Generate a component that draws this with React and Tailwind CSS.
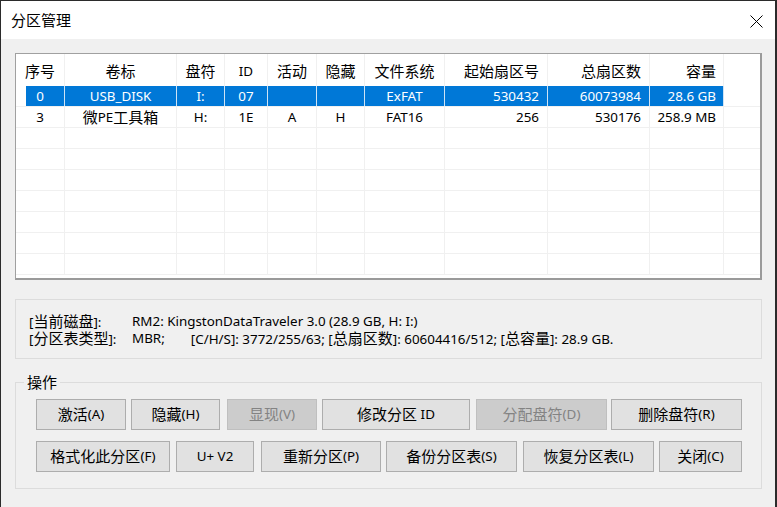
import React from 'react';

const CJK = /([\u3000-\u9fff\uff00-\uffef]+)/;

// CJK runs render a bit larger than Latin in this dialog
const Mix = ({ text }) =>
  text.split(CJK).map((s, i) =>
    i % 2 ? (
      <span key={i} className="text-[15px]">
        {s}
      </span>
    ) : (
      s
    )
  );

const COLS = [
  { key: 'no', title: '序号', w: 'w-[49px]', align: 'justify-center' },
  { key: 'label', title: '卷标', w: 'w-[112px]', align: 'justify-center' },
  { key: 'drive', title: '盘符', w: 'w-[48px]', align: 'justify-center' },
  { key: 'id', title: 'ID', w: 'w-[43px]', align: 'justify-center' },
  { key: 'active', title: '活动', w: 'w-[49px]', align: 'justify-center' },
  { key: 'hidden', title: '隐藏', w: 'w-[48px]', align: 'justify-center' },
  { key: 'fs', title: '文件系统', w: 'w-[80px]', align: 'justify-center' },
  { key: 'start', title: '起始扇区号', w: 'w-[103px]', align: 'justify-end pr-[8px]' },
  { key: 'total', title: '总扇区数', w: 'w-[102px]', align: 'justify-end pr-[8px]' },
  { key: 'size', title: '容量', w: 'w-[74px]', align: 'justify-end pr-[7px]' },
];

const ROWS = [
  { no: '0', label: 'USB_DISK', drive: 'I:', id: '07', active: '', hidden: '', fs: 'ExFAT', start: '530432', total: '60073984', size: '28.6 GB', selected: true },
  { no: '3', label: '微PE工具箱', drive: 'H:', id: '1E', active: 'A', hidden: 'H', fs: 'FAT16', start: '256', total: '530176', size: '258.9 MB' },
  {}, {}, {}, {}, {}, {}, {},
];

const ROW1 = [
  { label: '激活(A)', cls: 'ml-0 w-[90px]' },
  { label: '隐藏(H)', cls: 'ml-[5px] w-[89px]' },
  { label: '显现(V)', cls: 'ml-[7px] w-[90px]', disabled: true },
  { label: '修改分区 ID', cls: 'ml-[5px] w-[148px]' },
  { label: '分配盘符(D)', cls: 'ml-[6px] w-[131px]', disabled: true },
  { label: '删除盘符(R)', cls: 'ml-[4px] w-[131px]' },
];

const ROW2 = [
  { label: '格式化此分区(F)', cls: 'ml-0 w-[134px]' },
  { label: 'U+ V2', cls: 'ml-[6px] w-[78px]' },
  { label: '重新分区(P)', cls: 'ml-[7px] w-[120px]' },
  { label: '备份分区表(S)', cls: 'ml-[5px] w-[131px]' },
  { label: '恢复分区表(L)', cls: 'ml-[6px] w-[131px]' },
  { label: '关闭(C)', cls: 'ml-[5px] w-[83px]' },
];

const Btn = ({ label, cls, disabled }) => (
  <button
    type="button"
    className={`${cls} h-[31px] flex items-center justify-center whitespace-pre border ${
      disabled ? 'bg-[#cccccc] border-[#bfbfbf] text-[#838383]' : 'bg-[#e1e1e1] border-[#adadad] text-black'
    }`}
  >
    <Mix text={label} />
  </button>
);

export default function App() {
  return (
    <div className="w-[777px] h-[507px] overflow-hidden bg-[#f0f0f0] border-l border-t border-r-2 border-[#2b2b2b] font-['Noto_Sans','Noto_Sans_CJK_SC',sans-serif] text-[13.4px] text-black">
      {/* title bar */}
      <div className="h-[38px] bg-white flex items-center justify-between pl-[10px] pr-[12px]">
        <span className="text-[15px] leading-none">分区管理</span>
        <svg width="13" height="13" viewBox="0 0 13 13" className="mt-[2px]">
          <path d="M0.5 0.5 L12.5 12.5 M12.5 0.5 L0.5 12.5" stroke="#000" strokeWidth="1" fill="none" />
        </svg>
      </div>

      <div className="pl-[14px] pr-[13px]">
        {/* partition list */}
        <div className="mt-[14px] h-[227px] bg-white border-l border-t border-r-2 border-b-2 border-l-[#a0a0a0] border-t-[#a0a0a0] border-r-[#9a9a9a] border-b-[#9a9a9a] overflow-hidden">
          <div className="flex h-[32px]">
            {COLS.map((c) => (
              <div key={c.key} className={`${c.w} ${c.align} flex items-center pt-[3px] border-r border-[#f0f0f0]`}>
                <Mix text={c.title} />
              </div>
            ))}
          </div>
          {ROWS.map((r, ri) => (
            <div key={ri} className="flex h-[21px] border-b border-[#f0f0f0]">
              {COLS.map((c, ci) => {
                const sel = r.selected;
                const bg = sel
                  ? ci === 0
                    ? 'bg-[linear-gradient(to_right,#ffffff_10px,#0078d7_10px)] text-white'
                    : 'bg-[#0078d7] text-white'
                  : '';
                return (
                  <div
                    key={c.key}
                    className={`${c.w} ${c.align} ${bg} flex items-center border-r ${sel ? 'border-[#cfe3f5]' : 'border-[#f0f0f0]'}`}
                  >
                    {r[c.key] ? <Mix text={r[c.key]} /> : null}
                  </div>
                );
              })}
            </div>
          ))}
        </div>

        {/* disk info */}
        <div className="mt-[19px] h-[60px] border border-[#dcdcdc] pl-[13px] pt-[13px] leading-[17px]">
          <div className="flex h-[17px] items-center">
            <span className="w-[103px] shrink-0 whitespace-nowrap">
              <Mix text="[当前磁盘]:" />
            </span>
            <span className="whitespace-nowrap">RM2: KingstonDataTraveler 3.0 (28.9 GB, H: I:)</span>
          </div>
          <div className="flex h-[17px] items-center">
            <span className="w-[103px] shrink-0 whitespace-nowrap">
              <Mix text="[分区表类型]:" />
            </span>
            <span>MBR;</span>
            <span className="ml-[26px] whitespace-nowrap">
              <Mix text="[C/H/S]: 3772/255/63; [总扇区数]: 60604416/512; [总容量]: 28.9 GB." />
            </span>
          </div>
        </div>

        {/* operations */}
        <fieldset className="mt-[14px] h-[116px] border border-[#dcdcdc]">
          <legend className="ml-[8px] px-[3px] leading-[18px]">
            <Mix text="操作" />
          </legend>
          <div className="pl-[20px]">
            <div className="flex mt-[7px]">
              {ROW1.map((b) => (
                <Btn key={b.label} {...b} />
              ))}
            </div>
            <div className="flex mt-[11px]">
              {ROW2.map((b) => (
                <Btn key={b.label} {...b} />
              ))}
            </div>
          </div>
        </fieldset>
      </div>
    </div>
  );
}
